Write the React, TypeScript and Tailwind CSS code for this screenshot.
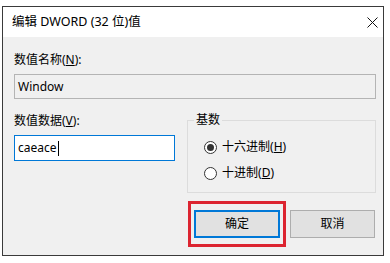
const font = { fontFamily: '"Noto Sans", "Noto Sans CJK SC", sans-serif' };

function Radio({ checked, label, mnemonic }: { checked: boolean; label: string; mnemonic: string }) {
  return (
    <div className="flex items-center h-[16px] gap-[5px]">
      <span className="w-[13px] h-[13px] rounded-full border border-[#333] bg-white flex items-center justify-center">
        {checked && <span className="w-[7px] h-[7px] rounded-full bg-[#333]" />}
      </span>
      <span className="text-[12px] leading-[16px] text-black">
        {label}(<span className="underline">{mnemonic}</span>)
      </span>
    </div>
  );
}

export default function App() {
  return (
    <div className="w-[390px] h-[263px] bg-white overflow-hidden" style={font}>
      <div className="ml-[2px] mt-[6px] w-[382px] h-[250px] border border-[#3a3a3a] flex flex-col">
        {/* title bar */}
        <div className="h-[30px] bg-white flex items-center justify-between pl-[9px] pr-[5px]">
          <span className="text-[12.5px] text-black">编辑 DWORD (32 位)值</span>
          <svg width="11" height="11" viewBox="0 0 11 11">
            <path d="M0.5 0.5 L10.5 10.5 M10.5 0.5 L0.5 10.5" stroke="#111" strokeWidth="1" />
          </svg>
        </div>

        {/* body */}
        <div className="flex-1 bg-[#f0f0f0] pl-[11px] pr-[7px] flex flex-col">
          <div className="mt-[15px] text-[12px] leading-[16px] text-black">
            数值名称(<span className="underline">N</span>):
          </div>
          <div className="mt-[6px] h-[25px] border border-[#b4b4b4] bg-[#f0f0f0] flex items-center pl-[3px] text-[12px] text-black">
            Window
          </div>

          <div className="mt-[13px] flex gap-[12px]">
            <div className="w-[161px] flex flex-col pt-[1px]">
              <div className="text-[12px] leading-[16px] text-black">
                数值数据(<span className="underline">V</span>):
              </div>
              <div className="mt-[6px] h-[26px] border border-[#0078d7] bg-white flex items-center pl-[3px] text-[12px] text-black">
                caeace
                <span className="ml-[1px] w-[1px] h-[15px] bg-black" />
              </div>
            </div>

            <fieldset className="flex-1 border border-[#dcdcdc] pl-[16px] pt-[11px] pb-[11px] flex flex-col gap-[10px]">
              <legend className="ml-[-10px] px-[2px] text-[12px] leading-[16px] text-black">基数</legend>
              <Radio checked label="十六进制" mnemonic="H" />
              <Radio checked={false} label="十进制" mnemonic="D" />
            </fieldset>
          </div>

          <div className="mt-[8px] flex justify-end items-start gap-[4px] pr-[1px]">
            <div className="border-[3px] border-[#dc2430] px-[3px] py-[6px]">
              <div className="w-[86px] h-[28px] border-2 border-[#0078d7] bg-[#e1e1e1] flex items-center justify-center text-[12px] text-black">
                确定
              </div>
            </div>
            <div className="mt-[9px] w-[85px] h-[28px] border border-[#adadad] bg-[#e1e1e1] flex items-center justify-center text-[12px] text-black">
              取消
            </div>
          </div>
        </div>
      </div>
    </div>
  );
}
